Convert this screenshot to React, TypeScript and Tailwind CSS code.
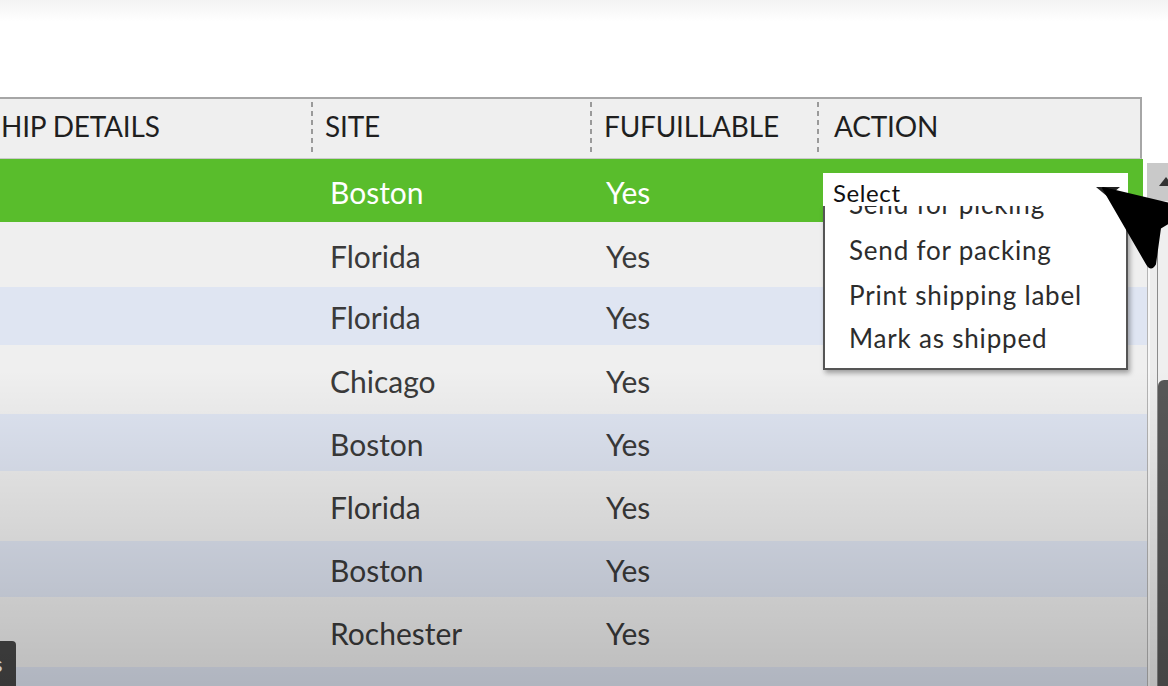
import React from "react";

const rows = [
  { site: "Boston", bg: "bg-[#59bd2c]", text: "text-white", h: "h-[63px]" },
  { site: "Florida", bg: "bg-[#efefef]", text: "text-[#3a3a3a]", h: "h-[65px]" },
  { site: "Florida", bg: "bg-[#dfe5f2]", text: "text-[#3a3a3a]", h: "h-[58px]" },
  { site: "Chicago", bg: "bg-[#efefef]", text: "text-[#3a3a3a]", h: "h-[69px]" },
  { site: "Boston", bg: "bg-[#dfe5f2]", text: "text-[#3a3a3a]", h: "h-[57px]" },
  { site: "Florida", bg: "bg-[#efefef]", text: "text-[#3a3a3a]", h: "h-[70px]" },
  { site: "Boston", bg: "bg-[#dfe5f2]", text: "text-[#3a3a3a]", h: "h-[56px]" },
  { site: "Rochester", bg: "bg-[#efefef]", text: "text-[#3a3a3a]", h: "h-[70px]" },
  { site: "", bg: "bg-[#dfe5f2]", text: "text-[#3a3a3a]", h: "h-[60px]" },
];

const dash =
  "w-[2px] self-stretch my-[3px] bg-[repeating-linear-gradient(to_bottom,#9a9a9a_0_5px,transparent_5px_9px)]";

export default function App() {
  return (
    <div className="relative w-[1168px] h-[686px] overflow-hidden bg-white font-['Lato',sans-serif]">
      <div className="h-[97px] bg-[linear-gradient(to_bottom,#f3f3f3,#ffffff_22px)]" />
      <div className="flex">
        <div className="w-[1147px]">
          {/* header */}
          <div className="w-[1142px] h-[62px] bg-[#efefef] border-t-2 border-r-2 border-[#a6a6a6] border-b border-b-[#c9c9c9] flex items-stretch text-[28px] text-[#1f1f1f] tracking-[-0.2px]">
            <div className="w-[311px] flex items-center pb-[5px] pl-[1px]">HIP DETAILS</div>
            <div className={dash} />
            <div className="w-[277px] flex items-center pb-[5px] pl-[12px]">SITE</div>
            <div className={dash} />
            <div className="w-[225px] flex items-center pb-[5px] pl-[12px]">FUFUILLABLE</div>
            <div className={dash} />
            <div className="flex-1 flex items-center pb-[5px] pl-[15px]">ACTION</div>
          </div>
          {rows.map((r, i) => (
            <div key={i} className={`${r.bg} ${r.text} ${r.h} ${i === 0 ? "w-[1143px]" : "w-[1147px]"} flex items-center pt-[3px] text-[30px]`}>
              <div className="w-[330px] shrink-0" />
              <div className="w-[276px] shrink-0">{r.site}</div>
              <div>{r.site ? "Yes" : ""}</div>
            </div>
          ))}
        </div>
        {/* scrollbar */}
        <div className="flex-1 pt-[66px] flex flex-col">
          <div className="h-[38px] bg-[#c9c9c9] relative overflow-hidden">
            <div className="absolute left-[12px] top-[14px] w-0 h-0 border-l-[7px] border-r-[7px] border-b-[9px] border-l-transparent border-r-transparent border-b-[#333]" />
          </div>
          <div className="flex-1 flex">
            <div className="w-px bg-[#b4b4b4]" />
            <div className="w-[2px] bg-[#f7f7f7]" />
            <div className="w-[7px] bg-[#ececec]" />
            <div className="w-px bg-[#8a8a8a]" />
            <div className="flex-1 flex flex-col bg-[#efefef]">
              <div className="h-[179px] shrink-0" />
              <div className="flex-1 bg-[#575757] rounded-tl-[6px]" />
            </div>
          </div>
        </div>
      </div>

      {/* dropdown */}
      <div className="absolute left-[823px] top-[205px] w-[305px] h-[165px] bg-white border-2 border-t-0 border-[#555] shadow-[2px_3px_5px_rgba(0,0,0,0.35)] overflow-hidden">
        <div className="-mt-[24px] pl-[24px] text-[26px] text-[#2c2c2c] tracking-[0.8px] whitespace-nowrap">
          <div className="h-[47px] flex items-center">Send for picking</div>
          <div className="h-[45px] flex items-center">Send for packing</div>
          <div className="h-[45px] flex items-center">Print shipping label</div>
          <div className="h-[41px] flex items-center">Mark as shipped</div>
        </div>
      </div>
      <div className="absolute left-[823px] top-[173px] w-[305px] h-[33px] bg-white flex items-center pt-[6px] pl-[10px] text-[24px] tracking-[0.6px] text-[#111]">
        Select
        <div className="absolute left-[273px] top-[14px] w-0 h-0 border-l-[12px] border-r-[12px] border-t-[10px] border-l-transparent border-r-transparent border-t-[#222]" />
      </div>

      {/* cursor */}
      <svg className="absolute left-0 top-0 pointer-events-none" width="1168" height="686">
        <path
          d="M1103 188 L1170 204 L1170 222 L1160 228 L1155 264 Q1151 271 1147 264 Z"
          fill="#000"
          stroke="#000"
          strokeWidth="2"
          strokeLinejoin="round"
        />
      </svg>

      {/* bottom-left badge */}
      <div className="absolute left-0 top-[641px] w-[16px] h-[45px] bg-[#474747] rounded-tr-[4px] overflow-hidden flex items-center">
        <span className="text-white text-[22px] -ml-[7px] leading-none">s</span>
      </div>

      {/* vignette */}
      <div className="absolute inset-0 pointer-events-none bg-[linear-gradient(to_bottom,transparent_370px,rgba(0,0,0,0.21)_686px)]" />
    </div>
  );
}
